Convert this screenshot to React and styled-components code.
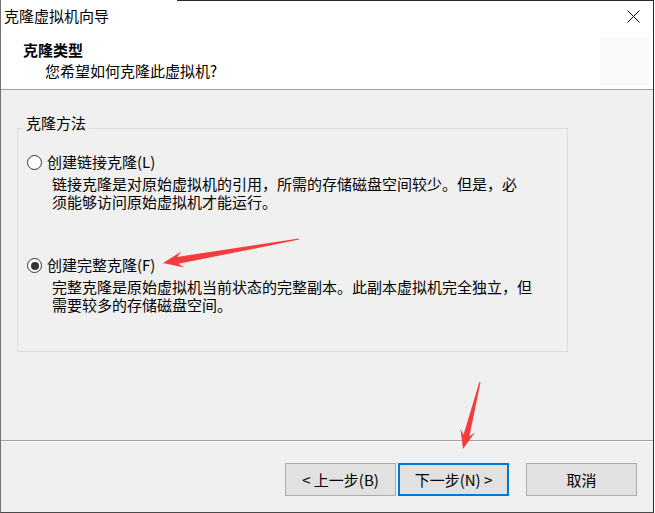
import React from "react";
import styled, { createGlobalStyle } from "styled-components";

const Global = createGlobalStyle`
  html, body { margin: 0; padding: 0; background: #ffffff; }
  body { font-family: "Noto Sans CJK SC", "Microsoft YaHei", sans-serif; font-size: 15px; color: #000; }
  * { box-sizing: border-box; }
`;

const Stage = styled.div`
  position: relative;
  width: 655px;
  height: 513px;
`;

const Window = styled.div`
  width: 654px;
  height: 513px;
  display: flex;
  flex-direction: column;
  background: #f0f0f0;
  border-left: 1px solid #707070;
  border-right: 1px solid #2b2b2b;
  border-bottom: 1px solid #4a4a4a;
`;

const Header = styled.div`
  height: 90px;
  flex: none;
  background: #ffffff;
  border-bottom: 1px solid #a0a0a0;
  display: flex;
  flex-direction: column;
`;

const TitleBar = styled.div`
  height: 32px;
  display: flex;
  align-items: center;
  justify-content: space-between;
  padding-left: 3px;
  padding-right: 13px;
  background: linear-gradient(to right, #ffffff 176px, #2b2b2b 176px) top left / 100% 1px no-repeat, #ffffff;
`;

const Title = styled.div`
  line-height: 18px;
  font-size: 15px;
`;

const CloseIcon = styled.svg`
  width: 13px;
  height: 13px;
  display: block;
`;

const HeaderBody = styled.div`
  flex: 1;
  display: flex;
  justify-content: space-between;
`;

const HeaderText = styled.div`
  padding: 9px 0 0 22px;
  display: flex;
  flex-direction: column;
  gap: 3px;
`;

const HeaderTitle = styled.div`
  font-weight: 700;
  line-height: 18px;
`;

const HeaderSub = styled.div`
  line-height: 18px;
  padding-left: 22px;
`;

const IconSlot = styled.div`
  width: 49px;
  height: 48px;
  margin: 5px 4px 0 0;
  background: #f9f9f9;
`;

const Content = styled.div`
  flex: 1;
  padding: 24px 0 0 16px;
`;

const Group = styled.fieldset`
  margin: 0;
  padding: 0;
  width: 551px;
  height: 238px;
  border: 1px solid #dcdcdc;
`;

const Legend = styled.legend`
  margin-left: 5px;
  padding: 0 3px 10px 3px;
  line-height: 18px;
  font-size: 15px;
`;

const Options = styled.div`
  padding: 11px 0 0 9px;
  display: flex;
  flex-direction: column;
  gap: 45px;
`;

const Option = styled.div`
  display: flex;
  flex-direction: column;
  gap: 4px;
`;

const RadioRow = styled.label`
  display: flex;
  align-items: center;
  gap: 5px;
  line-height: 18px;
`;

const RadioCircle = styled.span`
  width: 15px;
  height: 15px;
  border-radius: 50%;
  border: 1px solid #333333;
  background: #ffffff;
  display: flex;
  align-items: center;
  justify-content: center;
  margin-top: 1px;
  &::after {
    content: "";
    width: 8px;
    height: 8px;
    border-radius: 50%;
    background: ${(p) => (p.$checked ? "#333333" : "transparent")};
  }
`;

const Desc = styled.div`
  margin-left: 25px;
  width: ${(p) => p.$width}px;
  line-height: 18px;
`;

const Footer = styled.div`
  height: 72px;
  flex: none;
  border-top: 1px solid #a0a0a0;
  box-shadow: inset 0 1px 0 #ffffff;
  display: flex;
  align-items: flex-start;
  justify-content: flex-end;
  padding: 22px 16px 0 0;
`;

const Button = styled.button`
  width: 111px;
  height: 33px;
  margin-left: ${(p) => p.$gap}px;
  background: #e1e1e1;
  border: ${(p) => (p.$default ? "2px solid #0078d7" : "1px solid #adadad")};
  font-family: "Noto Sans CJK SC", sans-serif;
  font-size: 15px;
  line-height: 18px;
  color: #000;
  padding: 0;
  display: flex;
  align-items: center;
  justify-content: center;
`;

const Overlay = styled.svg`
  position: absolute;
  left: 0;
  top: 0;
  width: 655px;
  height: 513px;
  pointer-events: none;
`;

function arrowPoints(tip, tail, headLen, headHalf, neckHalf, tailHalf) {
  const dx = tail[0] - tip[0];
  const dy = tail[1] - tip[1];
  const len = Math.hypot(dx, dy);
  const ux = dx / len, uy = dy / len;
  const nx = -uy, ny = ux;
  const b = [tip[0] + ux * headLen, tip[1] + uy * headLen];
  const k = [tip[0] + ux * (headLen - 5), tip[1] + uy * (headLen - 5)];
  const pts = [
    tip,
    [b[0] + nx * headHalf, b[1] + ny * headHalf],
    [k[0] + nx * neckHalf, k[1] + ny * neckHalf],
    [tail[0] + nx * tailHalf, tail[1] + ny * tailHalf],
    [tail[0] - nx * tailHalf, tail[1] - ny * tailHalf],
    [k[0] - nx * neckHalf, k[1] - ny * neckHalf],
    [b[0] - nx * headHalf, b[1] - ny * headHalf],
  ];
  return pts.map((p) => p[0].toFixed(1) + "," + p[1].toFixed(1)).join(" ");
}

const options = [
  {
    label: "创建链接克隆(L)",
    checked: false,
    width: 467,
    text: "链接克隆是对原始虚拟机的引用，所需的存储磁盘空间较少。但是，必须能够访问原始虚拟机才能运行。",
  },
  {
    label: "创建完整克隆(F)",
    checked: true,
    width: 482,
    text: "完整克隆是原始虚拟机当前状态的完整副本。此副本虚拟机完全独立，但需要较多的存储磁盘空间。",
  },
];

export default function App() {
  return (
    <>
      <Global />
      <Stage>
        <Window>
          <Header>
            <TitleBar>
              <Title>克隆虚拟机向导</Title>
              <CloseIcon viewBox="0 0 13 13">
                <path d="M0.5 0.5 L12.5 12.5 M12.5 0.5 L0.5 12.5" stroke="#000" strokeWidth="1" fill="none" />
              </CloseIcon>
            </TitleBar>
            <HeaderBody>
              <HeaderText>
                <HeaderTitle>克隆类型</HeaderTitle>
                <HeaderSub>您希望如何克隆此虚拟机?</HeaderSub>
              </HeaderText>
              <IconSlot />
            </HeaderBody>
          </Header>
          <Content>
            <Group>
              <Legend>克隆方法</Legend>
              <Options>
                {options.map((o) => (
                  <Option key={o.label}>
                    <RadioRow>
                      <RadioCircle $checked={o.checked} />
                      {o.label}
                    </RadioRow>
                    <Desc $width={o.width}>{o.text}</Desc>
                  </Option>
                ))}
              </Options>
            </Group>
          </Content>
          <Footer>
            <Button $gap={0}>&lt; 上一步(B)</Button>
            <Button $gap={2} $default>下一步(N) &gt;</Button>
            <Button $gap={17}>取消</Button>
          </Footer>
        </Window>
        <Overlay viewBox="0 0 655 513">
          <polygon points={arrowPoints([163, 263], [299, 239], 20, 8, 3.5, 0.6)} fill="#f53c3c" />
          <polygon points={arrowPoints([463, 449], [480, 382], 19, 7.5, 3, 0.6)} fill="#f53c3c" />
        </Overlay>
      </Stage>
    </>
  );
}
